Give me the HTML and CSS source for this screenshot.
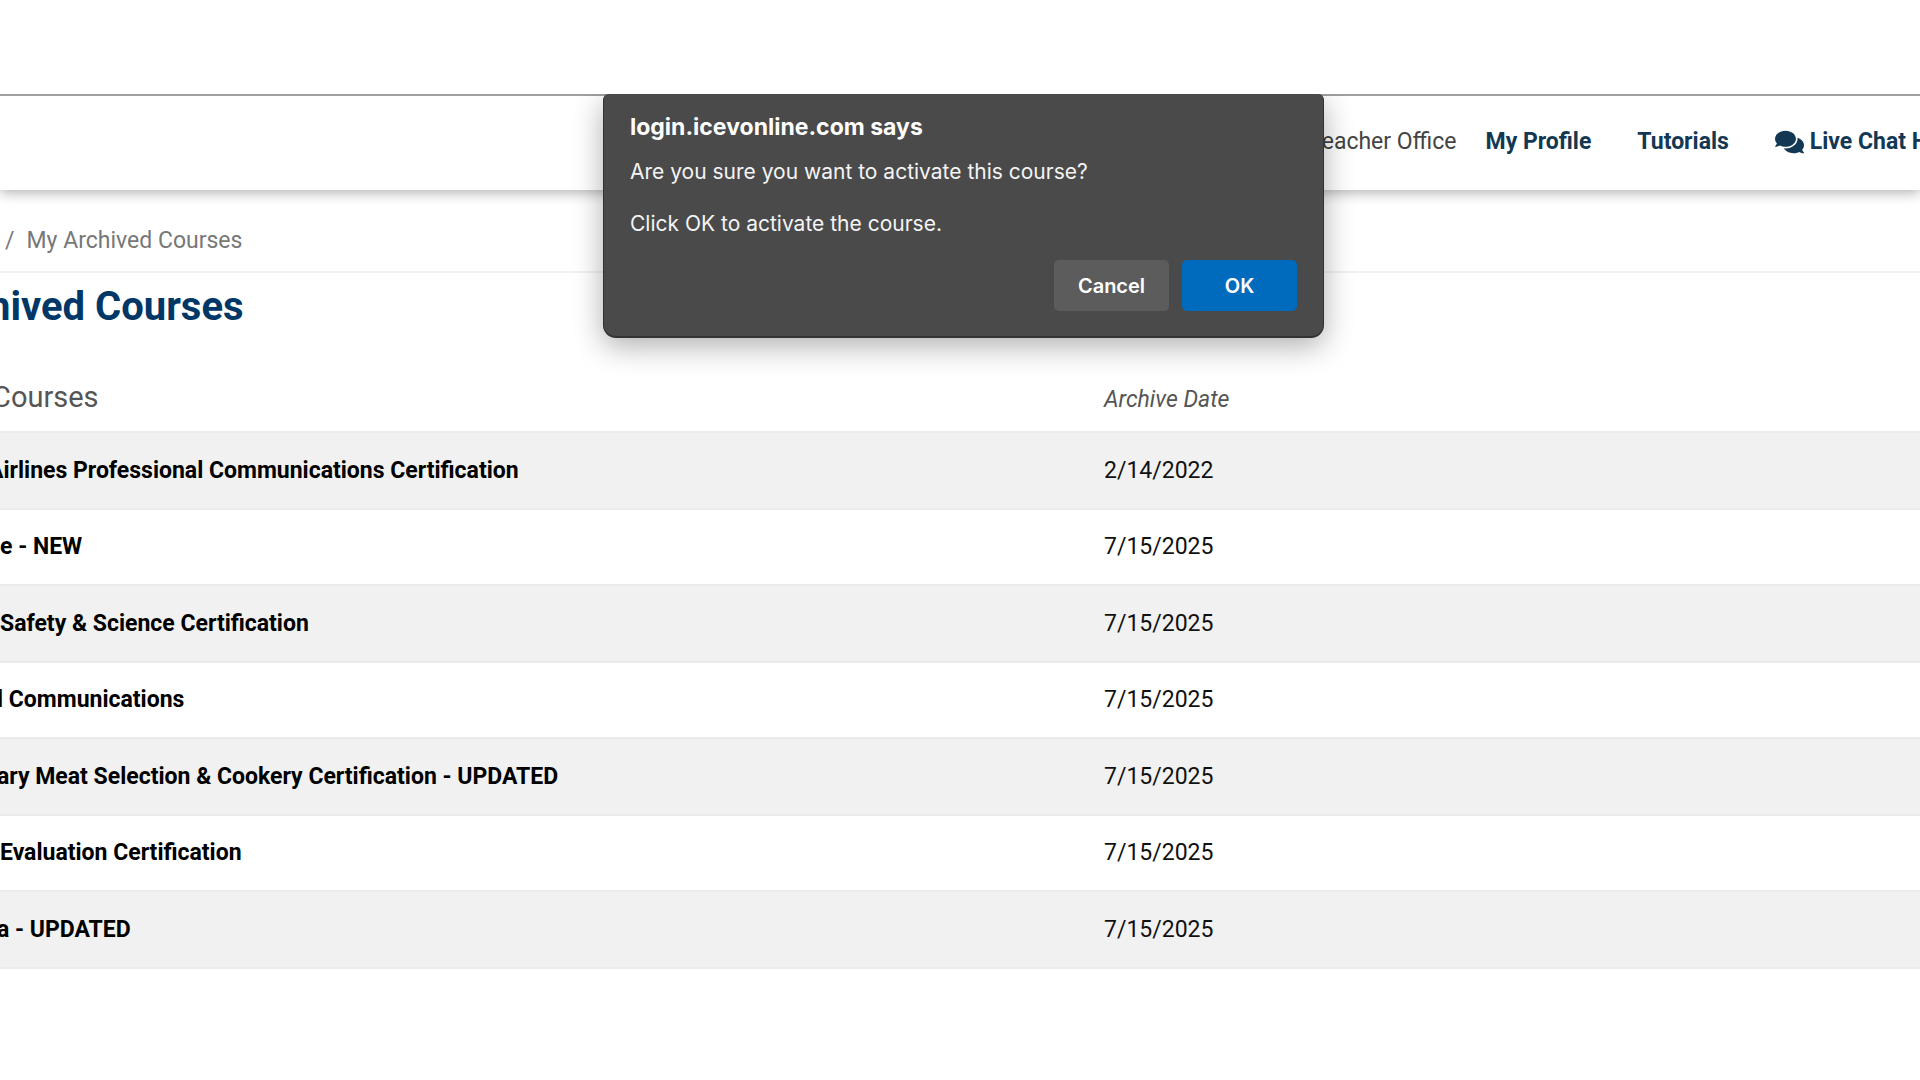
FILE: index.html
```html
<!DOCTYPE html>
<html lang="en">
<head>
<meta charset="utf-8">
<title>My Archived Courses</title>
<link rel="stylesheet" href="styles.css">
</head>
<body>
<div class="viewport">
  <header class="topbar">
    <nav class="nav" aria-label="Account">
      <span class="office">Teacher Office</span>
      <a class="nav-link" href="#profile">My Profile</a>
      <a class="nav-link" href="#tutorials">Tutorials</a>
      <a class="nav-link chat" href="#chat">
        <svg class="chat-icon" viewBox="0 0 576 512" aria-hidden="true"><path d="M416 192c0-88.400-93.100-160-208-160S0 103.600 0 192c0 34.300 14.100 65.900 38 92-13.400 30.200-35.500 54.200-35.800 54.500-2.200 2.300-2.800 5.700-1.500 8.700S4.800 352 8 352c36.600 0 66.900-12.300 88.700-25 32.200 15.700 70.300 25 111.300 25 114.900 0 208-71.600 208-160zm122 220c23.900-26 38-57.700 38-92 0-66.900-53.500-124.200-129.300-148.100.9 6.600 1.300 13.300 1.300 20.100 0 105.900-107.700 192-240 192-10.800 0-21.300-.8-31.700-1.900C207.800 439.600 281.800 480 368 480c41 0 79.100-9.200 111.300-25 21.800 12.700 52.100 25 88.700 25 3.200 0 6.100-1.900 7.300-4.800 1.300-2.900.7-6.300-1.500-8.700-.3-.3-22.400-24.200-35.800-54.500z"/></svg>
        <span>Live Chat H</span>
      </a>
    </nav>
  </header>
  <main>
    <nav class="breadcrumb" aria-label="Breadcrumb"><span>/</span><span>My Archived Courses</span></nav>
    <h1 class="page-title">hived Courses</h1>
    <table class="courses">
      <thead>
        <tr><th class="name-head" scope="col">Courses</th><th class="date-head" scope="col">Archive Date</th></tr>
      </thead>
      <tbody>
        <tr><td class="name lead-cut">Airlines Professional Communications Certification</td><td>2/14/2022</td></tr>
        <tr><td class="name">e - NEW</td><td>7/15/2025</td></tr>
        <tr><td class="name">Safety &amp; Science Certification</td><td>7/15/2025</td></tr>
        <tr><td class="name edge-cut">l Communications</td><td>7/15/2025</td></tr>
        <tr><td class="name edge-cut">ary Meat Selection &amp; Cookery Certification - UPDATED</td><td>7/15/2025</td></tr>
        <tr><td class="name">Evaluation Certification</td><td>7/15/2025</td></tr>
        <tr><td class="name edge-cut">a - UPDATED</td><td>7/15/2025</td></tr>
      </tbody>
    </table>
  </main>
  <div class="dialog" role="dialog" aria-labelledby="dialog-title">
    <h2 class="dialog-title" id="dialog-title">login.icevonline.com says</h2>
    <div class="dialog-body">
      <p class="dialog-text">Are you sure you want to activate this course?</p>
      <p class="dialog-text">Click OK to activate the course.</p>
    </div>
    <div class="dialog-actions">
      <button class="btn" type="button">Cancel</button>
      <button class="btn btn-primary" type="button">OK</button>
    </div>
  </div>
</div>
</body>
</html>
```
FILE: styles.css
```css
* { box-sizing: border-box; }

body {
  margin: 0;
  padding-top: 94px;
  background: #fff;
  color: #111;
  font-family: Roboto, "Liberation Sans", sans-serif;
  font-size: 23px;
  line-height: 28px;
}

.viewport {
  position: relative;
  overflow: hidden;
  padding-bottom: 40px;
}

.topbar {
  position: relative;
  height: 96px;
  background: #fff;
  border-top: 2px solid #a0a0a0;
  box-shadow: 0 3px 12px rgba(0, 0, 0, 0.3);
}

.nav {
  display: flex;
  align-items: center;
  justify-content: flex-end;
  margin-right: -8px;
  padding-top: 32px;
  white-space: nowrap;
}

.office { color: #444; margin-right: 29px; }

.nav-link {
  color: #133853;
  font-weight: 700;
  text-decoration: none;
  margin-right: 46px;
}

.chat {
  display: flex;
  align-items: center;
  gap: 6px;
  margin-right: 0;
}

.chat-icon { width: 29px; height: 26px; fill: currentColor; }

.breadcrumb {
  display: flex;
  gap: 12px;
  padding: 37px 5px 16px;
  border-bottom: 2px solid #f1f1f1;
  color: #777;
}

.page-title {
  margin: 0 0 0 -12px;
  padding-top: 11px;
  color: #003767;
  font-size: 40px;
  line-height: 46px;
}

.courses {
  width: 100%;
  margin-top: 49px;
  border-collapse: separate;
  border-spacing: 0;
  table-layout: fixed;
}

.courses th {
  height: 52px;
  padding: 4px 0 0;
  color: #555;
  font-weight: 400;
  text-align: left;
  vertical-align: baseline;
}

.courses .name-head { width: 1104px; font-size: 29px; text-indent: -8px; }
.courses .date-head { font-style: italic; }

.courses td {
  height: 76px;
  padding: 0;
  border-top: 2px solid #ebebeb;
}

.courses tr:nth-child(odd) td { height: 77px; background: #f1f1f1; }
.courses tr:last-child td { height: 79px; border-bottom: 2px solid #ebebeb; }
.courses .name { color: #000; font-weight: 700; }
.courses .lead-cut { text-indent: -12px; }
.courses .edge-cut { text-indent: -3px; }

.dialog {
  position: absolute;
  top: 0;
  left: 603px;
  width: 721px;
  padding: 19px 26px 25px;
  background: #4a4a4a;
  border: solid #333;
  border-width: 0 1px 2px;
  border-radius: 6px 6px 13px 13px;
  box-shadow: 0 8px 30px rgba(0, 0, 0, 0.32);
  color: #f4f4f4;
  font-family: Inter, "Liberation Sans", sans-serif;
  font-size: 21px;
  line-height: 26px;
}

.dialog-title {
  margin: 0 0 18px;
  color: #fff;
  font-size: 23px;
  font-weight: 700;
  line-height: 28px;
}

.dialog-body {
  display: flex;
  flex-direction: column;
  gap: 26px;
  margin-bottom: 23px;
}

.dialog-text { margin: 0; }

.dialog-actions { display: flex; justify-content: flex-end; gap: 13px; }

.btn {
  width: 115px;
  height: 51px;
  padding: 0;
  border: 0;
  border-radius: 5px;
  background: #5c5c5c;
  color: #fff;
  font-family: inherit;
  font-size: 20px;
  font-weight: 600;
}

.btn-primary { background: #006bbd; }
```
